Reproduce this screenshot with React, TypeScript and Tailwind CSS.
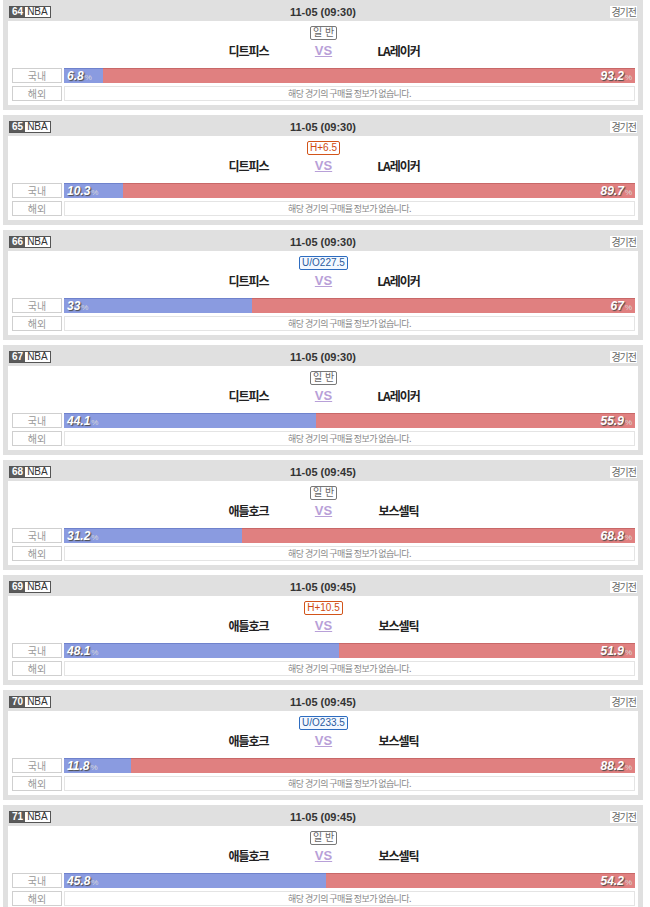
type Game = {
  no: number;
  time: string;
  kind: "normal" | "handicap" | "overunder";
  label: string;
  home: string;
  away: string;
  homePct: string;
  awayPct: string;
};

const games: Game[] = [
  { no: 64, time: "11-05 (09:30)", kind: "normal", label: "일 반", home: "디트피스", away: "LA레이커", homePct: "6.8", awayPct: "93.2" },
  { no: 65, time: "11-05 (09:30)", kind: "handicap", label: "H+6.5", home: "디트피스", away: "LA레이커", homePct: "10.3", awayPct: "89.7" },
  { no: 66, time: "11-05 (09:30)", kind: "overunder", label: "U/O227.5", home: "디트피스", away: "LA레이커", homePct: "33", awayPct: "67" },
  { no: 67, time: "11-05 (09:30)", kind: "normal", label: "일 반", home: "디트피스", away: "LA레이커", homePct: "44.1", awayPct: "55.9" },
  { no: 68, time: "11-05 (09:45)", kind: "normal", label: "일 반", home: "애틀호크", away: "보스셀틱", homePct: "31.2", awayPct: "68.8" },
  { no: 69, time: "11-05 (09:45)", kind: "handicap", label: "H+10.5", home: "애틀호크", away: "보스셀틱", homePct: "48.1", awayPct: "51.9" },
  { no: 70, time: "11-05 (09:45)", kind: "overunder", label: "U/O233.5", home: "애틀호크", away: "보스셀틱", homePct: "11.8", awayPct: "88.2" },
  { no: 71, time: "11-05 (09:45)", kind: "normal", label: "일 반", home: "애틀호크", away: "보스셀틱", homePct: "45.8", awayPct: "54.2" },
];

const kindStyle = {
  normal: "border-[#777] text-[#666] bg-white",
  handicap: "border-[#d2541a] text-[#d04a10] bg-white",
  overunder: "border-[#2d6cc0] text-[#2a5a9c] bg-[#f3f8ff]",
};

function Pct({ value }: { value: string }) {
  return (
    <span className="flex items-baseline">
      <span className="font-['Liberation_Sans',sans-serif] text-[12px] font-bold italic text-white [text-shadow:1px_1px_1px_#4a4a4a]">
        {value}
      </span>
      <span className="ml-[1px] font-['Liberation_Sans',sans-serif] text-[8px] text-[#d8d8d8]">%</span>
    </span>
  );
}

function GameCard({ g }: { g: Game }) {
  return (
    <div className="mb-[5px] ml-[3px] w-[640px] bg-[#e0e0e0] px-[5px] pb-[5px]">
      {/* header */}
      <div className="relative flex h-[21px] items-center justify-between px-[1px] pt-[3px]">
        <div className="flex h-[12px] items-stretch border border-[#555]">
          <span className="flex items-center bg-[#5a5a5a] px-[2px] font-['Liberation_Sans',sans-serif] text-[10px] font-bold leading-none text-white">
            {g.no}
          </span>
          <span className="flex items-center bg-white px-[2px] font-['Liberation_Sans',sans-serif] text-[10px] leading-none text-[#333]">
            NBA
          </span>
        </div>
        <span className="absolute left-1/2 top-[4px] -translate-x-1/2 font-['Liberation_Sans',sans-serif] text-[11px] font-bold text-[#333]">
          {g.time}
        </span>
        <span className="flex h-[12px] items-center bg-white px-[1px] text-[10px] leading-none tracking-[-1px] text-[#666]">
          경기전
        </span>
      </div>

      {/* body */}
      <div className="flex flex-col bg-white px-[4px] pb-[4px] pt-[5px] pr-[3px]">
        <div className="flex h-[14px] justify-center">
          <span
            className={`flex h-[14px] items-center rounded-[2px] border px-[2px] font-['Liberation_Sans','Noto_Sans_CJK_KR',sans-serif] text-[10px] leading-none ${kindStyle[g.kind]}`}
          >
            {g.label}
          </span>
        </div>
        <div className="flex h-[22px] items-center justify-center">
          <span className="w-[120px] text-center text-[12px] font-bold tracking-[-1px] text-[#222]">{g.home}</span>
          <span className="w-[30px] text-center font-['Liberation_Sans',sans-serif] text-[13px] font-bold text-[#b8a0d8] underline decoration-[#b8a0d8]">
            VS
          </span>
          <span className="w-[120px] text-center text-[12px] font-bold tracking-[-1px] text-[#222]">{g.away}</span>
        </div>

        <div className="mt-[6px] flex h-[15px] gap-[2px]">
          <span className="flex w-[50px] items-center justify-center border border-[#cfcfcf] text-[10px] leading-none text-[#999]">
            국내
          </span>
          <div className="flex flex-1">
            <div
              className="flex items-center border-t border-[#6f82cc] bg-[#8a9be0] pl-[3px]"
              style={{ width: `${g.homePct}%` }}
            >
              <Pct value={g.homePct} />
            </div>
            <div className="flex flex-1 items-center justify-end border-t border-[#c86868] bg-[#e08080] pr-[3px]">
              <Pct value={g.awayPct} />
            </div>
          </div>
        </div>

        <div className="mt-[3px] flex h-[15px] gap-[2px]">
          <span className="flex w-[50px] items-center justify-center border border-[#cfcfcf] text-[10px] leading-none text-[#999]">
            해외
          </span>
          <div className="flex flex-1 items-center justify-center border border-[#e4e4e4] text-[9px] leading-none tracking-[-0.6px] text-[#888]">
            해당 경기의 구매율 정보가 없습니다.
          </div>
        </div>
      </div>
    </div>
  );
}

export default function App() {
  return (
    <div className="min-h-[907px] w-[650px] overflow-hidden bg-white font-['Noto_Sans_CJK_KR',sans-serif]">
      {games.map((g) => (
        <GameCard key={g.no} g={g} />
      ))}
    </div>
  );
}
